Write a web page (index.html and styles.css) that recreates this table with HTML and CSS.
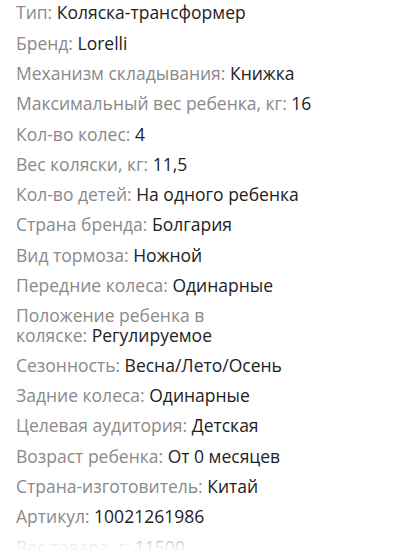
FILE: index.html
```html
<!DOCTYPE html>
<html lang="ru">
<head>
<meta charset="utf-8">
<link rel="stylesheet" href="styles.css">
</head>
<body>
<div class="specs">
  <ul class="spec-list">
    <li class="spec"><span class="label">Тип: </span><span class="value">Коляска-трансформер</span></li>
    <li class="spec"><span class="label">Бренд: </span><span class="value">Lorelli</span></li>
    <li class="spec"><span class="label">Механизм складывания: </span><span class="value">Книжка</span></li>
    <li class="spec"><span class="label">Максимальный вес ребенка, кг: </span><span class="value">16</span></li>
    <li class="spec"><span class="label">Кол-во колес: </span><span class="value">4</span></li>
    <li class="spec"><span class="label">Вес коляски, кг: </span><span class="value">11,5</span></li>
    <li class="spec"><span class="label">Кол-во детей: </span><span class="value">На одного ребенка</span></li>
    <li class="spec"><span class="label">Страна бренда: </span><span class="value">Болгария</span></li>
    <li class="spec"><span class="label">Вид тормоза: </span><span class="value">Ножной</span></li>
    <li class="spec"><span class="label">Передние колеса: </span><span class="value">Одинарные</span></li>
    <li class="spec"><span class="label">Положение ребенка в<br>коляске: </span><span class="value">Регулируемое</span></li>
    <li class="spec"><span class="label">Сезонность: </span><span class="value">Весна/Лето/Осень</span></li>
    <li class="spec"><span class="label">Задние колеса: </span><span class="value">Одинарные</span></li>
    <li class="spec"><span class="label">Целевая аудитория: </span><span class="value">Детская</span></li>
    <li class="spec"><span class="label">Возраст ребенка: </span><span class="value">От 0 месяцев</span></li>
    <li class="spec"><span class="label">Страна-изготовитель: </span><span class="value">Китай</span></li>
    <li class="spec"><span class="label">Артикул: </span><span class="value">10021261986</span></li>
    <li class="spec"><span class="label">Вес товара, г: </span><span class="value">11500</span></li>
  </ul>
  <div class="fade"></div>
</div>
</body>
</html>
```

FILE: styles.css
```css
html, body {
  margin: 0;
  padding: 0;
  background: #ffffff;
}

body {
  font-family: "Open Sans", "Noto Sans", sans-serif;
  font-size: 17.5px;
  line-height: 19.2px;
  width: 405px;
  height: 550px;
  overflow: hidden;
}

.specs {
  position: relative;
  padding: 3.4px 16px 0;
}

.spec-list {
  list-style: none;
  margin: 0;
  padding: 0;
  display: flex;
  flex-direction: column;
  gap: 11.1px;
}

.spec {
  margin: 0;
}

.label {
  color: #8a8a8a;
}

.value {
  color: #222222;
}

.fade {
  position: absolute;
  left: 0;
  right: 0;
  top: 534px;
  height: 30px;
  background: linear-gradient(to bottom, rgba(255,255,255,0.45), rgba(255,255,255,0.9) 40%, #ffffff);
}
```
